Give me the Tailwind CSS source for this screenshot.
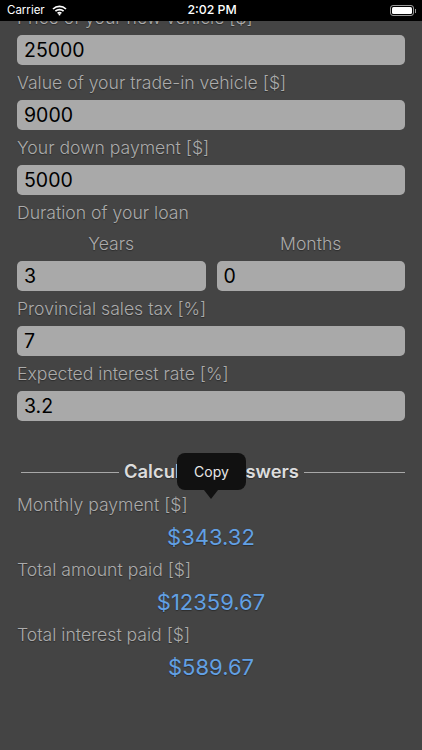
<!DOCTYPE html>
<html>
<head>
<meta charset="utf-8">
<script src="https://cdn.jsdelivr.net/npm/@tailwindcss/browser@4"></script>
</head>
<body class="m-0 bg-[#444444]">
<div class="relative w-[422px] h-[750px] overflow-hidden bg-[#444444] font-['Inter','Liberation_Sans',sans-serif]">
  <div class="absolute top-0 left-0 w-full h-[21px] bg-black text-white flex items-center justify-between z-10 pl-[7px] pr-[6px]">
    <div class="flex items-center gap-[7px] w-[120px]">
      <span class="text-[11.5px] leading-none">Carrier</span>
      <svg width="15" height="11" viewBox="0 0 15 11" fill="none" stroke="white"><path d="M1 4 A9.5 9.5 0 0 1 14 4" stroke-width="1.7"/><path d="M3.4 6.2 A6 6 0 0 1 11.6 6.2" stroke-width="1.7"/><path d="M5.6 8.3 A3 3 0 0 1 9.4 8.3" stroke-width="1.7"/><circle cx="7.5" cy="9.6" r="1" fill="white" stroke="none"/></svg>
    </div>
    <span class="text-[12.3px] font-medium leading-none pl-[1px]">2:02 PM</span>
    <div class="flex items-center justify-end w-[120px]">
      <div class="w-[24px] h-[11px] rounded-[3px] border border-white/60 p-[1px]"><div class="w-full h-full bg-white rounded-[1.5px]"></div></div>
      <div class="w-[1px] h-[4px] bg-white/60 ml-[1px]"></div>
    </div>
  </div>

  <div class="px-[17px] text-[17.6px] font-light text-[#ababab] [text-shadow:0_1px_1px_rgba(0,0,0,0.35)]">
    <div class="h-[35px] flex items-center pt-[2px]">Price of your new vehicle [$]</div>
    <div class="h-[30px] rounded-[5px] bg-[#a9a9a9] px-[7px] pt-[2px] flex items-center text-[19.5px] font-normal text-black [text-shadow:none]">25000</div>
    <div class="h-[35px] flex items-center pt-[2px]">Value of your trade-in vehicle [$]</div>
    <div class="h-[30px] rounded-[5px] bg-[#a9a9a9] px-[7px] pt-[2px] flex items-center text-[19.5px] font-normal text-black [text-shadow:none]">9000</div>
    <div class="h-[35px] flex items-center pt-[2px]">Your down payment [$]</div>
    <div class="h-[30px] rounded-[5px] bg-[#a9a9a9] px-[7px] pt-[2px] flex items-center text-[19.5px] font-normal text-black [text-shadow:none]">5000</div>
    <div class="h-[35px] flex items-center pt-[2px]">Duration of your loan</div>
    <div class="grid grid-cols-2 gap-x-[11px]">
      <div class="h-[31px] flex items-center justify-center pb-[2px]">Years</div>
      <div class="h-[31px] flex items-center justify-center pb-[2px]">Months</div>
      <div class="h-[30px] rounded-[5px] bg-[#a9a9a9] px-[7px] pt-[2px] flex items-center text-[19.5px] font-normal text-black [text-shadow:none]">3</div>
      <div class="h-[30px] rounded-[5px] bg-[#a9a9a9] px-[7px] pt-[2px] flex items-center text-[19.5px] font-normal text-black [text-shadow:none]">0</div>
    </div>
    <div class="h-[35px] flex items-center pt-[2px]">Provincial sales tax [%]</div>
    <div class="h-[30px] rounded-[5px] bg-[#a9a9a9] px-[7px] pt-[2px] flex items-center text-[19.5px] font-normal text-black [text-shadow:none]">7</div>
    <div class="h-[35px] flex items-center pt-[2px]">Expected interest rate [%]</div>
    <div class="h-[30px] rounded-[5px] bg-[#a9a9a9] px-[7px] pt-[2px] flex items-center text-[19.5px] font-normal text-black [text-shadow:none]">3.2</div>

    <div class="mt-[37px] h-[28px] flex items-center gap-[5px] pl-[4px]">
      <div class="w-[98px] h-px bg-[#a8a8a8]"></div>
      <span class="text-[18.4px] font-semibold text-[#dcdcdc]">Calculated answers</span>
      <div class="flex-1 h-px bg-[#a8a8a8]"></div>
    </div>
    <div class="h-[32px] flex items-center mt-[2px] pt-[2px]">Monthly payment [$]</div>
    <div class="h-[33px] flex items-center justify-center pt-[2px] text-[22px] font-normal text-[#62a0e4]">$343.32</div>
    <div class="h-[32px] flex items-center pt-[2px]">Total amount paid [$]</div>
    <div class="h-[33px] flex items-center justify-center pt-[2px] text-[22px] font-normal text-[#62a0e4]">$12359.67</div>
    <div class="h-[32px] flex items-center pt-[2px]">Total interest paid [$]</div>
    <div class="h-[33px] flex items-center justify-center pt-[2px] text-[22px] font-normal text-[#62a0e4]">$589.67</div>
  </div>

  <div class="absolute left-[177px] top-[453px] w-[69px] h-[37px] rounded-[8px] bg-[#111111] flex items-center justify-center pb-[1px] text-[14px] text-[#e8e8e8] z-20">Copy
    <div class="absolute left-[27px] top-[37px] w-0 h-0 border-l-[7px] border-r-[7px] border-t-[9px] border-l-transparent border-r-transparent border-t-[#111111]"></div>
  </div>
</div>
</body>
</html>
